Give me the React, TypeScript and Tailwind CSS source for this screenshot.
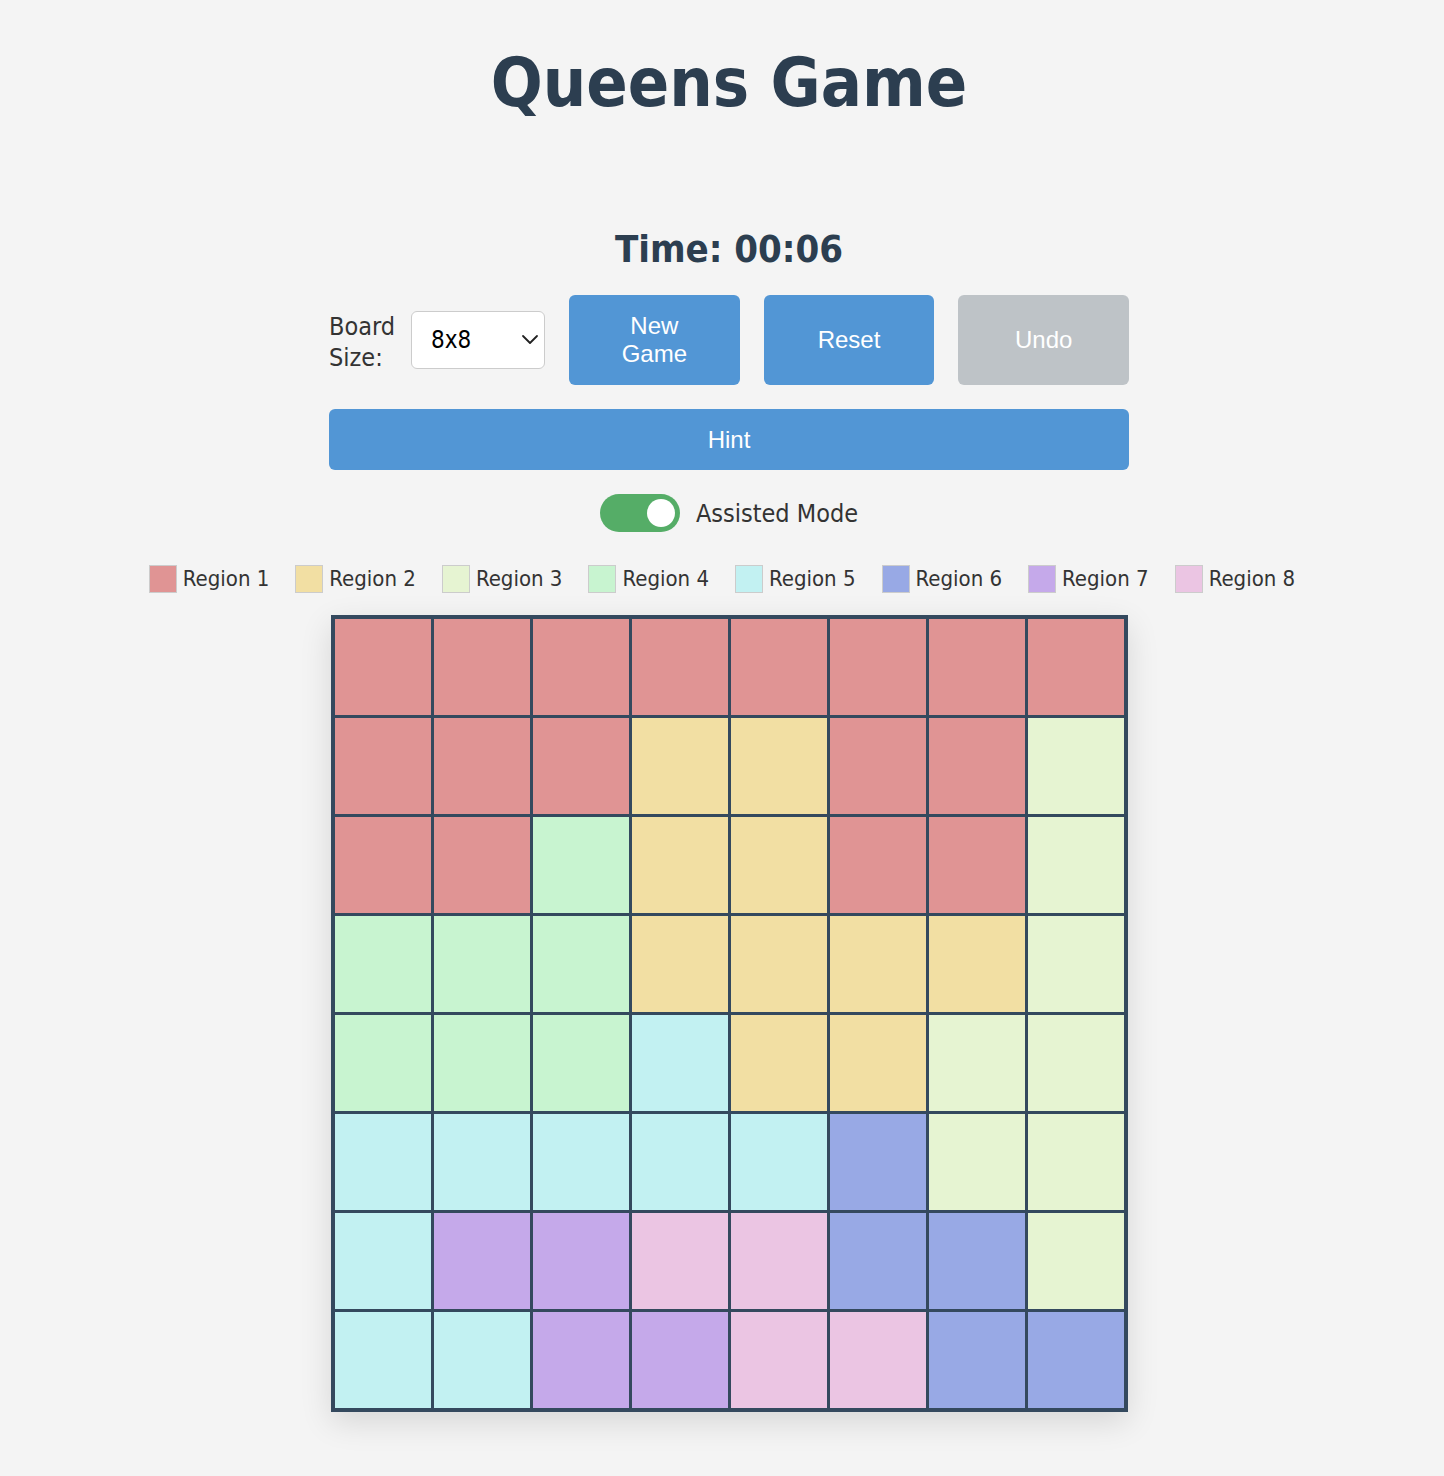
import React from "react";

const COLORS: Record<number, string> = {
  1: "#E09494",
  2: "#F2DFA3",
  3: "#E6F4D2",
  4: "#C8F4D0",
  5: "#C2F1F2",
  6: "#98A9E5",
  7: "#C5A9EA",
  8: "#EBC5E3",
};

const GRID = [
  [1, 1, 1, 1, 1, 1, 1, 1],
  [1, 1, 1, 2, 2, 1, 1, 3],
  [1, 1, 4, 2, 2, 1, 1, 3],
  [4, 4, 4, 2, 2, 2, 2, 3],
  [4, 4, 4, 5, 2, 2, 3, 3],
  [5, 5, 5, 5, 5, 6, 3, 3],
  [5, 7, 7, 8, 8, 6, 6, 3],
  [5, 5, 7, 7, 8, 8, 6, 6],
];

const TAHOMA = "font-['DejaVu_Sans_Condensed','DejaVu_Sans',sans-serif]";
const ARIAL = "font-['Liberation_Sans',Arial,sans-serif]";

export default function App() {
  return (
    <div className={`min-h-screen bg-[#f4f4f4] ${TAHOMA} flex flex-col items-center pl-[14px]`}>
      <h1 className="mt-[49px] text-[68px] leading-none font-bold text-[#2c3e50]">Queens Game</h1>

      <div className="mt-[113px] text-[38px] leading-none font-bold text-[#2c3e50]">Time: 00:06</div>

      <div className="mt-[27px] w-[800px] flex items-center gap-[24px]">
        <div className="flex items-center w-[216px] gap-[16px]">
          <label className="w-[66px] text-[25px] leading-[31px] pt-[3px] text-[#333]">Board Size:</label>
          <div className="relative">
            <select
              defaultValue="8x8"
              className="appearance-none w-[134px] h-[58px] bg-white border border-[#ccc] rounded-[6px] pl-[19px] text-[24px] text-black outline-none"
            >
              <option>6x6</option>
              <option>7x7</option>
              <option>8x8</option>
              <option>9x9</option>
            </select>
            <svg
              className="absolute right-[6px] top-[21px] pointer-events-none"
              width="18"
              height="14"
              viewBox="0 0 18 14"
              fill="none"
              stroke="#222"
              strokeWidth="1.8"
              strokeLinecap="round"
              strokeLinejoin="round"
            >
              <path d="M2 4 L9 11 L16 4" />
            </svg>
          </div>
        </div>
        <button className={`flex-1 h-[90px] rounded-[6px] bg-[#5296d5] text-white text-[24px] leading-[28px] px-[30px] ${ARIAL}`}>
          New Game
        </button>
        <button className={`flex-1 h-[90px] rounded-[6px] bg-[#5296d5] text-white text-[24px] leading-[28px] px-[30px] ${ARIAL}`}>
          Reset
        </button>
        <button className={`flex-1 h-[90px] rounded-[6px] bg-[#bec3c7] text-white text-[24px] leading-[28px] px-[30px] ${ARIAL}`}>
          Undo
        </button>
      </div>

      <button className={`mt-[24px] w-[800px] h-[61px] rounded-[6px] bg-[#5296d5] text-white text-[24px] ${ARIAL}`}>
        Hint
      </button>

      <div className="mt-[24px] flex items-center gap-[16px]">
        <div className="w-[80px] h-[38px] rounded-full bg-[#55ad67] flex items-center justify-end pr-[5px]">
          <div className="w-[28px] h-[28px] rounded-full bg-white" />
        </div>
        <span className="text-[25px] leading-[30px] pt-[2px] text-[#333]">Assisted Mode</span>
      </div>

      <div className="mt-[30px] -ml-[14px] flex items-center gap-[26px]">
        {[1, 2, 3, 4, 5, 6, 7, 8].map((r) => (
          <div key={r} className="flex items-center gap-[6px]">
            <div className="w-[28px] h-[28px] border border-[#ccc]" style={{ backgroundColor: COLORS[r] }} />
            <span className="text-[22px] text-[#333]">Region {r}</span>
          </div>
        ))}
      </div>

      <div className="mt-[20px] mb-[63px] p-[4px] bg-[#34495e] grid grid-cols-[repeat(8,96px)] gap-[3px] shadow-[0_10px_30px_rgba(0,0,0,0.12)]">
        {GRID.flatMap((row, i) =>
          row.map((r, j) => (
            <div key={`${i}-${j}`} className="w-[96px] h-[96px]" style={{ backgroundColor: COLORS[r] }} />
          ))
        )}
      </div>
    </div>
  );
}
